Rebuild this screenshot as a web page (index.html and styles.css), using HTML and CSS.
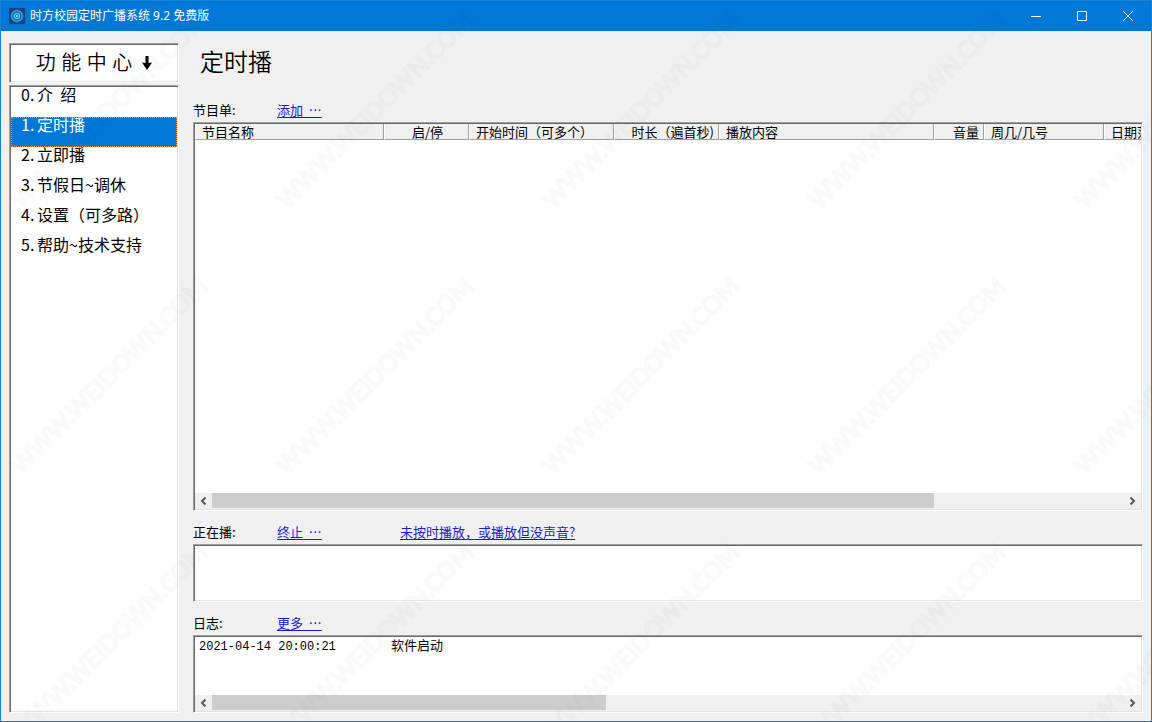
FILE: index.html
```html
<!DOCTYPE html>
<html lang="zh-CN">
<head>
<meta charset="utf-8">
<title>时方校园定时广播系统 9.2 免费版</title>
<link rel="stylesheet" href="styles.css">
</head>
<body>
<div class="window">
  <header class="titlebar">
    <svg class="app-icon" viewBox="0 0 16 16" aria-hidden="true">
      <rect width="16" height="16" rx="1" fill="#1b3f7c"/>
      <circle cx="8" cy="8" r="6.8" fill="#176fae"/>
      <circle cx="8" cy="8" r="5.2" fill="none" stroke="#35a5d6" stroke-width="1.2"/>
      <circle cx="8" cy="8" r="2.8" fill="#1f86c2" stroke="#58c4e6" stroke-width="1"/>
      <circle cx="8" cy="8" r="1" fill="#a5e6f6"/>
    </svg>
    <span class="app-name">时方校园定时广播系统 9.2 免费版</span>
    <button class="win-btn" type="button" aria-label="最小化"><svg viewBox="0 0 10 10"><path d="M0 5.5H10"/></svg></button>
    <button class="win-btn" type="button" aria-label="最大化"><svg viewBox="0 0 10 10"><path d="M.5 .5H9.5V9.5H.5Z"/></svg></button>
    <button class="win-btn" type="button" aria-label="关闭"><svg viewBox="0 0 10 10"><path d="M0 0L10 10M10 0L0 10"/></svg></button>
  </header>

  <div class="content">
    <aside class="sidebar">
      <div class="sunken nav-title">功 能 中 心
        <svg class="arrow" viewBox="0 0 10 14" aria-hidden="true"><path d="M3.5 0H6.5V7L10 6.5L5 14L0 6.5L3.5 7Z"/></svg>
      </div>
      <nav class="sunken nav-list">
        <button class="nav-item" type="button"><span class="num">0.</span>介 &nbsp;绍</button>
        <button class="nav-item selected" type="button" aria-current="page"><span class="num">1.</span>定时播</button>
        <button class="nav-item" type="button"><span class="num">2.</span>立即播</button>
        <button class="nav-item" type="button"><span class="num">3.</span>节假日~调休</button>
        <button class="nav-item" type="button"><span class="num">4.</span>设置（可多路）</button>
        <button class="nav-item" type="button"><span class="num">5.</span>帮助~技术支持</button>
      </nav>
    </aside>

    <main class="main">
      <h1 class="page-title">定时播</h1>

      <div class="row">
        <span>节目单:</span>
        <a href="#add">添加 &nbsp;…</a>
      </div>
      <section class="sunken panel programs">
        <div class="view">
          <table class="grid">
            <colgroup>
              <col class="c-name"><col class="c-state"><col class="c-start"><col class="c-length">
              <col class="c-content"><col class="c-volume"><col class="c-week"><col class="c-date">
            </colgroup>
            <thead>
              <tr>
                <th>节目名称</th>
                <th class="center">启/停</th>
                <th>开始时间（可多个）</th>
                <th class="right">时长（遍首秒)</th>
                <th>播放内容</th>
                <th class="right">音量</th>
                <th>周几/几号</th>
                <th>日期范围</th>
              </tr>
            </thead>
          </table>
        </div>
        <div class="scrollbar">
          <button class="step" type="button" aria-label="向左滚动"><svg viewBox="0 0 7 8"><path d="M5.5 .5L2 4L5.5 7.5"/></svg></button>
          <div class="track"><div class="thumb" style="width:79.2%"></div></div>
          <button class="step" type="button" aria-label="向右滚动"><svg viewBox="0 0 7 8"><path d="M1.5 .5L5 4L1.5 7.5"/></svg></button>
        </div>
      </section>

      <div class="row">
        <span>正在播:</span>
        <a href="#stop">终止 &nbsp;…</a>
        <a href="#trouble">未按时播放，或播放但没声音?</a>
      </div>
      <section class="sunken panel playing"></section>

      <div class="row">
        <span>日志:</span>
        <a href="#more">更多 &nbsp;…</a>
      </div>
      <section class="sunken panel log">
        <div class="view">
          <div class="log-line"><time class="stamp">2021-04-14 20:00:21</time><span>软件启动</span></div>
        </div>
        <div class="scrollbar">
          <button class="step" type="button" aria-label="向左滚动"><svg viewBox="0 0 7 8"><path d="M5.5 .5L2 4L5.5 7.5"/></svg></button>
          <div class="track"><div class="thumb" style="width:43.2%"></div></div>
          <button class="step" type="button" aria-label="向右滚动"><svg viewBox="0 0 7 8"><path d="M1.5 .5L5 4L1.5 7.5"/></svg></button>
        </div>
      </section>
    </main>
  </div>

  <svg class="watermark" aria-hidden="true">
    <defs>
      <pattern id="mark" width="266" height="266" patternUnits="userSpaceOnUse">
        <text class="mark-text" transform="translate(20 209) rotate(-45)">WWW.WEIDOWN.COM</text>
      </pattern>
    </defs>
    <rect width="100%" height="100%" fill="url(#mark)"/>
  </svg>
</div>
</body>
</html>
```
FILE: styles.css
```css
* { box-sizing: border-box; }

body {
  margin: 0;
  font: 13px/18px "Noto Sans CJK SC", sans-serif;
  color: #000;
}

button {
  margin: 0;
  padding: 0;
  border: 0;
  background: none;
  font: inherit;
  color: inherit;
}

.window {
  position: relative;
  display: flex;
  flex-direction: column;
  height: 100vh;
  border: 1px solid #1883d7;
  background: #f0f0f0;
  overflow: hidden;
}

.titlebar {
  display: flex;
  align-items: center;
  height: 30px;
  padding-left: 8px;
  background: #0078d7;
  color: #fff;
  font-family: "Noto Sans", "Noto Sans CJK SC", sans-serif;
  font-size: 12px;
}

.app-icon { width: 16px; height: 16px; margin-right: 5px; }
.app-name { flex: 1; }

.win-btn {
  display: flex;
  align-items: center;
  justify-content: center;
  width: 46px;
  height: 30px;
}
.win-btn svg {
  width: 10px;
  height: 10px;
  fill: none;
  stroke: #fff;
  stroke-width: 1;
}

.content {
  flex: 1;
  display: flex;
  gap: 14px;
  min-height: 0;
  padding: 12px 8px 8px;
}

.sunken {
  border: 1px solid;
  border-color: #a0a0a0 #fff #fff #a0a0a0;
  box-shadow: inset 1px 1px #696969, inset -1px -1px #e3e3e3;
  background: #fff;
  padding: 1px;
}

.sidebar {
  flex: none;
  display: flex;
  flex-direction: column;
  gap: 2px;
  width: 170px;
}

.nav-title {
  display: flex;
  align-items: center;
  justify-content: center;
  gap: 10px;
  height: 40px;
  font-family: "Liberation Sans", "Noto Sans CJK SC", sans-serif;
  font-size: 20px;
  font-weight: 350;
}
.arrow { width: 10px; height: 14px; }

.nav-list { flex: 1; }

.nav-item {
  display: flex;
  align-items: baseline;
  width: 100%;
  height: 30px;
  padding-left: 10px;
  font-size: 16px;
  line-height: 14px;
  text-align: left;
}
.nav-item.selected {
  background: #0078d7;
  color: #fff;
  outline: 1px dotted #ff8728;
  outline-offset: -1px;
}
.num { width: 16px; }

.main {
  flex: 1;
  display: flex;
  flex-direction: column;
  min-width: 0;
}

.page-title {
  height: 46px;
  margin: 0;
  padding-left: 7px;
  font-size: 24px;
  font-weight: 350;
  line-height: 36px;
}

.row {
  display: grid;
  grid-template-columns: 84px 123px 1fr;
  align-items: center;
  height: 33px;
  padding-top: 8px;
}
.row a {
  justify-self: start;
  color: #1a1adc;
  text-underline-offset: 2px;
}

.panel { display: flex; flex-direction: column; }
.programs { flex: 1; min-height: 0; }
.playing { height: 58px; }
.log { height: 78px; }

.view {
  flex: 1;
  min-height: 0;
  overflow-x: clip;
  overflow-y: visible;
}

.grid {
  width: 1019px;
  table-layout: fixed;
  border-collapse: separate;
  border-spacing: 0;
}
.c-name { width: 189px; }
.c-state { width: 85px; }
.c-start { width: 145px; }
.c-length { width: 105px; }
.c-content { width: 215px; }
.c-volume { width: 50px; }
.c-week { width: 120px; }
.c-date { width: 110px; }

.grid th {
  padding: 0 4px 0 6px;
  border-right: 1px solid #a0a0a0;
  border-bottom: 1px solid #a0a0a0;
  border-left: 1px solid #fff;
  background: #f0f0f0;
  font-weight: 400;
  line-height: 15px;
  text-align: left;
  white-space: nowrap;
}
.grid .center { text-align: center; }
.grid .right { text-align: right; }

.scrollbar {
  flex: none;
  display: flex;
  height: 16px;
  background: #f0f0f0;
}
.track { flex: 1; }
.thumb { height: 15px; background: #cdcdcd; }
.step {
  display: flex;
  align-items: center;
  justify-content: center;
  width: 17px;
  height: 15px;
}
.step svg {
  width: 7px;
  height: 8px;
  fill: none;
  stroke: #555;
  stroke-width: 2;
}

.log-line {
  display: grid;
  grid-template-columns: 192px 1fr;
  align-items: baseline;
  padding-left: 4px;
  line-height: 16px;
}
.stamp { font-family: "Liberation Mono", monospace; font-size: 12px; }

.watermark {
  position: absolute;
  inset: 0;
  width: 100%;
  height: 100%;
  pointer-events: none;
}
.mark-text {
  font: 24px Lato, sans-serif;
  fill: none;
  stroke: #000;
  stroke-opacity: 0.02;
  stroke-width: 2;
}
```
